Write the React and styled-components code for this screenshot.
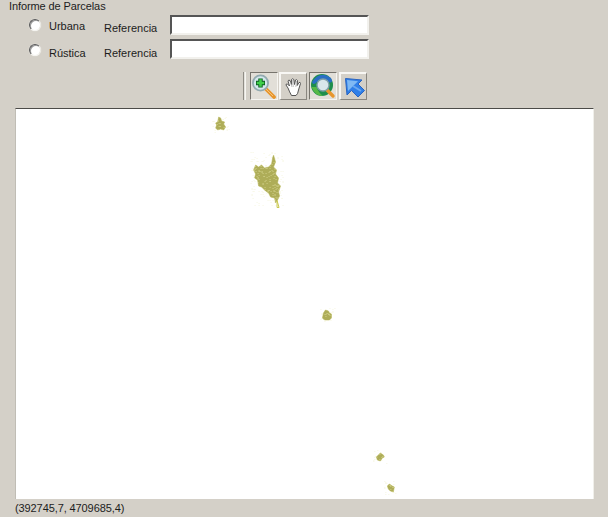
import React from "react";
import styled, { createGlobalStyle } from "styled-components";

const Global = createGlobalStyle`
  html, body { margin: 0; padding: 0; background: #d4d0c8; }
  body { font-family: "Liberation Sans", Arial, sans-serif; font-size: 11px; color: #1c1c1c; }
`;

const Page = styled.div`
  width: 608px;
  height: 517px;
  display: flex;
  flex-direction: column;
  overflow: hidden;
  background: #d4d0c8;
`;
const Title = styled.div`
  height: 15px;
  line-height: 13px;
  padding-left: 9px;
  letter-spacing: -0.1px;
`;
const Form = styled.div`
  display: flex;
  flex-direction: column;
  gap: 4px;
`;
const Row = styled.div`
  display: flex;
  height: 20px;
  padding-left: 29px;
`;
const Radio = styled.span`
  width: 12px;
  height: 12px;
  margin-top: ${(p) => p.$top}px;
  border-radius: 50%;
  background: #fff;
  border: 1px solid;
  border-color: #555 #e8e6e0 #f4f3ef #555;
  box-sizing: border-box;
  box-shadow: inset 1px 1px 0 #999, 0 0 1px #fff;
`;
const Choice = styled.span`
  width: 55px;
  margin-left: 8px;
  padding-top: ${(p) => p.$top}px;
  line-height: 13px;
`;
const FieldLabel = styled.span`
  width: 66px;
  padding-top: ${(p) => p.$top}px;
  line-height: 13px;
`;
const Input = styled.span`
  width: 199px;
  height: 20px;
  box-sizing: border-box;
  background: #fff;
  border: 2px solid;
  border-color: #555 #f2f1ed #f2f1ed #555;
`;
const Toolbar = styled.div`
  height: 28px;
  margin-top: 13px;
  padding-left: 243px;
  display: flex;
  align-items: stretch;
`;
const Grip = styled.span`
  width: 1px;
  margin-right: 4px;
  background: #e4e2dc;
  border-left: 1px solid #8f8c85;
  border-right: 1px solid #f6f5f1;
`;
const ToolButton = styled.span`
  width: 28px;
  height: 28px;
  box-sizing: border-box;
  margin-right: ${(p) => p.$after}px;
  display: flex;
  align-items: center;
  justify-content: center;
  border-style: solid;
  border-width: ${(p) => (p.$pressed ? "1px" : "2px 1px 1px 2px")};
  border-color: ${(p) =>
    p.$pressed ? "#77746d #f6f5f1 #f6f5f1 #77746d" : "#f8f7f4 #8a8780 #8a8780 #f8f7f4"};
  background: ${(p) => (p.$pressed ? "#e2dfd8" : "#d4d0c8")};
`;
const MapFrame = styled.div`
  height: 391px;
  margin: 8px 14px 0 15px;
  background: #fff;
  border-top: 1px solid #4c4b48;
  border-left: 1px solid #c0bdb5;
  border-right: 1px solid #f0efea;
  box-sizing: border-box;
`;
const MapCanvas = styled.svg`
  display: block;
  width: 100%;
  height: 100%;
`;
const Status = styled.div`
  line-height: 13px;
  padding: 3px 0 0 15px;
  letter-spacing: -0.1px;
`;

const ZoomIcon = () => (
  <svg width="26" height="26" viewBox="0 0 26 26">
    <path d="M14 15 L23 24" stroke="#e8962c" strokeWidth="3.8" strokeLinecap="round" />
    <path d="M15 16 L22 23" stroke="#f6c27a" strokeWidth="1" />
    <circle cx="9.5" cy="10" r="7.6" fill="#d4e8ec" stroke="#93aab0" strokeWidth="1.8" />
    <path d="M9.5 5.5V14.5M5 10H14" stroke="#0d5c20" strokeWidth="4.4" />
    <path d="M9.5 6.3V13.7M5.8 10H13.2" stroke="#3fcf4a" strokeWidth="2.6" />
  </svg>
);
const HandIcon = () => (
  <svg width="22" height="22" viewBox="0 0 22 22">
    <path
      d="M5 12 L3 9 Q3 7.5 4.5 8 L6.5 10 L5 5 Q5.5 3.5 7 4.5 L8.7 8.5 L8.5 3.5 Q9.5 2 10.8 3.5 L11.5 8.5 L12.5 4 Q13.8 3 14.5 4.5 L14.2 9.5 L16 6.5 Q17.5 6 17.5 7.5 L15.5 14 Q15 18 13 19.5 L8.5 19.5 Q6.5 16 5 12 Z"
      fill="#fff"
      stroke="#555"
      strokeWidth="1"
      strokeLinejoin="round"
    />
    <path d="M7 5.5 L9 11M9.7 4 L10.3 11M13.5 5 L12.8 11" stroke="#999" strokeWidth="0.6" fill="none" />
  </svg>
);
const GlobeIcon = () => (
  <svg width="26" height="26" viewBox="0 0 26 26">
    <circle cx="12" cy="12" r="11" fill="#1f8e4c" />
    <path d="M2 9 Q10 -3 21 5 Q24 11 18 9 Q12 5 7 9 Q3 13 2 9 Z" fill="#2a6fc4" />
    <path d="M1.5 14 Q5 23 13 23 Q8 19 6.5 14 Z" fill="#57b947" />
    <path d="M16 16 L23 23" stroke="#e8962c" strokeWidth="3.4" strokeLinecap="round" />
    <circle cx="13" cy="12" r="6" fill="#d8e6ea" stroke="#7fa0a8" strokeWidth="1.4" />
  </svg>
);
const ArrowIcon = () => (
  <svg width="24" height="24" viewBox="0 0 24 24">
    <path
      d="M3.5 3.5 L20 5 L16 9 L22.5 15.5 L16 22 L9.5 15.5 L5 20 Z"
      fill="#2f7fe8"
      stroke="#2a64c0"
      strokeWidth="1"
      strokeLinejoin="round"
    />
    <path d="M5 5 L16 6.2 L6 16 Z" fill="#7fb9f4" />
    <path d="M11 11 L19 16" stroke="#6aa8f0" strokeWidth="2" />
  </svg>
);

const blobs = [
  { d: "M219 117 L221 118 L222 121 L225 122 L224 124 L226 127 L224 130 L221 129 L218 130 L216 128 L217 125 L216 123 L218 122 Z", box: [216, 117, 11, 13] },
  { d: "M274 155 L276 162 L274 167 L277 170 L276 174 L279 178 L278 183 L281 186 L279 192 L280 196 L278 200 L276 203 L275 198 L271 197 L269 193 L266 191 L262 187 L259 186 L258 180 L255 178 L256 174 L254 170 L256 165 L259 167 L262 165 L265 168 L269 167 L272 164 L273 158 Z", box: [254, 155, 27, 48] },
  { d: "M326 310 L329 311 L330 313 L332 314 L332 318 L330 320 L325 320 L323 318 L324 313 Z", box: [323, 310, 10, 10] },
  { d: "M381 453 L384 455 L385 457 L383 458 L381 461 L378 460 L377 457 Z", box: [377, 453, 9, 8] },
  { d: "M390 484 L393 486 L395 487 L394 492 L391 491 L389 489 L388 486 Z", box: [388, 484, 8, 8] },
];

// Fixed scatter of pixels: the map's parcels are many tiny polygons with pale edges.
const scatter = ([x, y, w, h], seed, divisor) => {
  const dots = [];
  const count = Math.round((w * h) / divisor);
  for (let i = 0; i < count; i++) {
    const a = Math.sin(seed * 91.7 + i * 12.9898) * 43758.5453;
    const b = Math.sin(seed * 37.3 + i * 78.233) * 24634.6345;
    dots.push([x + Math.floor((a - Math.floor(a)) * w), y + Math.floor((b - Math.floor(b)) * h)]);
  }
  return dots;
};
const grow = ([x, y, w, h], by) => [x - by, y - by, w + by * 2, h + by * 2];

export default function App() {
  return (
    <Page>
      <Global />
      <Title>Informe de Parcelas</Title>
      <Form>
        <Row>
          <Radio $top={4} />
          <Choice $top={5}>Urbana</Choice>
          <FieldLabel $top={7}>Referencia</FieldLabel>
          <Input />
        </Row>
        <Row>
          <Radio $top={5} />
          <Choice $top={8}>Rústica</Choice>
          <FieldLabel $top={8}>Referencia</FieldLabel>
          <Input />
        </Row>
      </Form>
      <Toolbar>
        <Grip />
        <ToolButton $pressed $after={1}><ZoomIcon /></ToolButton>
        <ToolButton $after={2}><HandIcon /></ToolButton>
        <ToolButton $pressed $after={2}><GlobeIcon /></ToolButton>
        <ToolButton $after={0}><ArrowIcon /></ToolButton>
      </Toolbar>
      <MapFrame>
        <MapCanvas viewBox="16 109 578 390" preserveAspectRatio="none">
          <defs>
            {blobs.map((b, i) => (
              <clipPath key={b.d} id={`parcel-${i}`}>
                <path d={b.d} />
              </clipPath>
            ))}
          </defs>
          {blobs.map((b, i) =>
            scatter(grow(b.box, 3), i + 11, 14).map(([x, y], k) => (
              <rect key={k} x={x} y={y} width="1" height="1" fill="#f6f6e2" />
            ))
          )}
          {blobs.map((b, i) => (
            <g key={b.d}>
              <path d={b.d} fill="#aead58" stroke="#dcdba0" strokeWidth="1" strokeLinejoin="round" paintOrder="stroke" />
              <g clipPath={`url(#parcel-${i})`}>
                {scatter(b.box, i + 1, 7).map(([x, y], k) => (
                  <rect key={k} x={x} y={y} width="1" height="1" fill="#cfce86" />
                ))}
              </g>
            </g>
          ))}
          <path d="M277.5 200.5 L279.5 207.5 L277.5 207.5 Z" fill="#fff" stroke="#c9c84e" strokeWidth="1" />
        </MapCanvas>
      </MapFrame>
      <Status>(392745,7, 4709685,4)</Status>
    </Page>
  );
}
